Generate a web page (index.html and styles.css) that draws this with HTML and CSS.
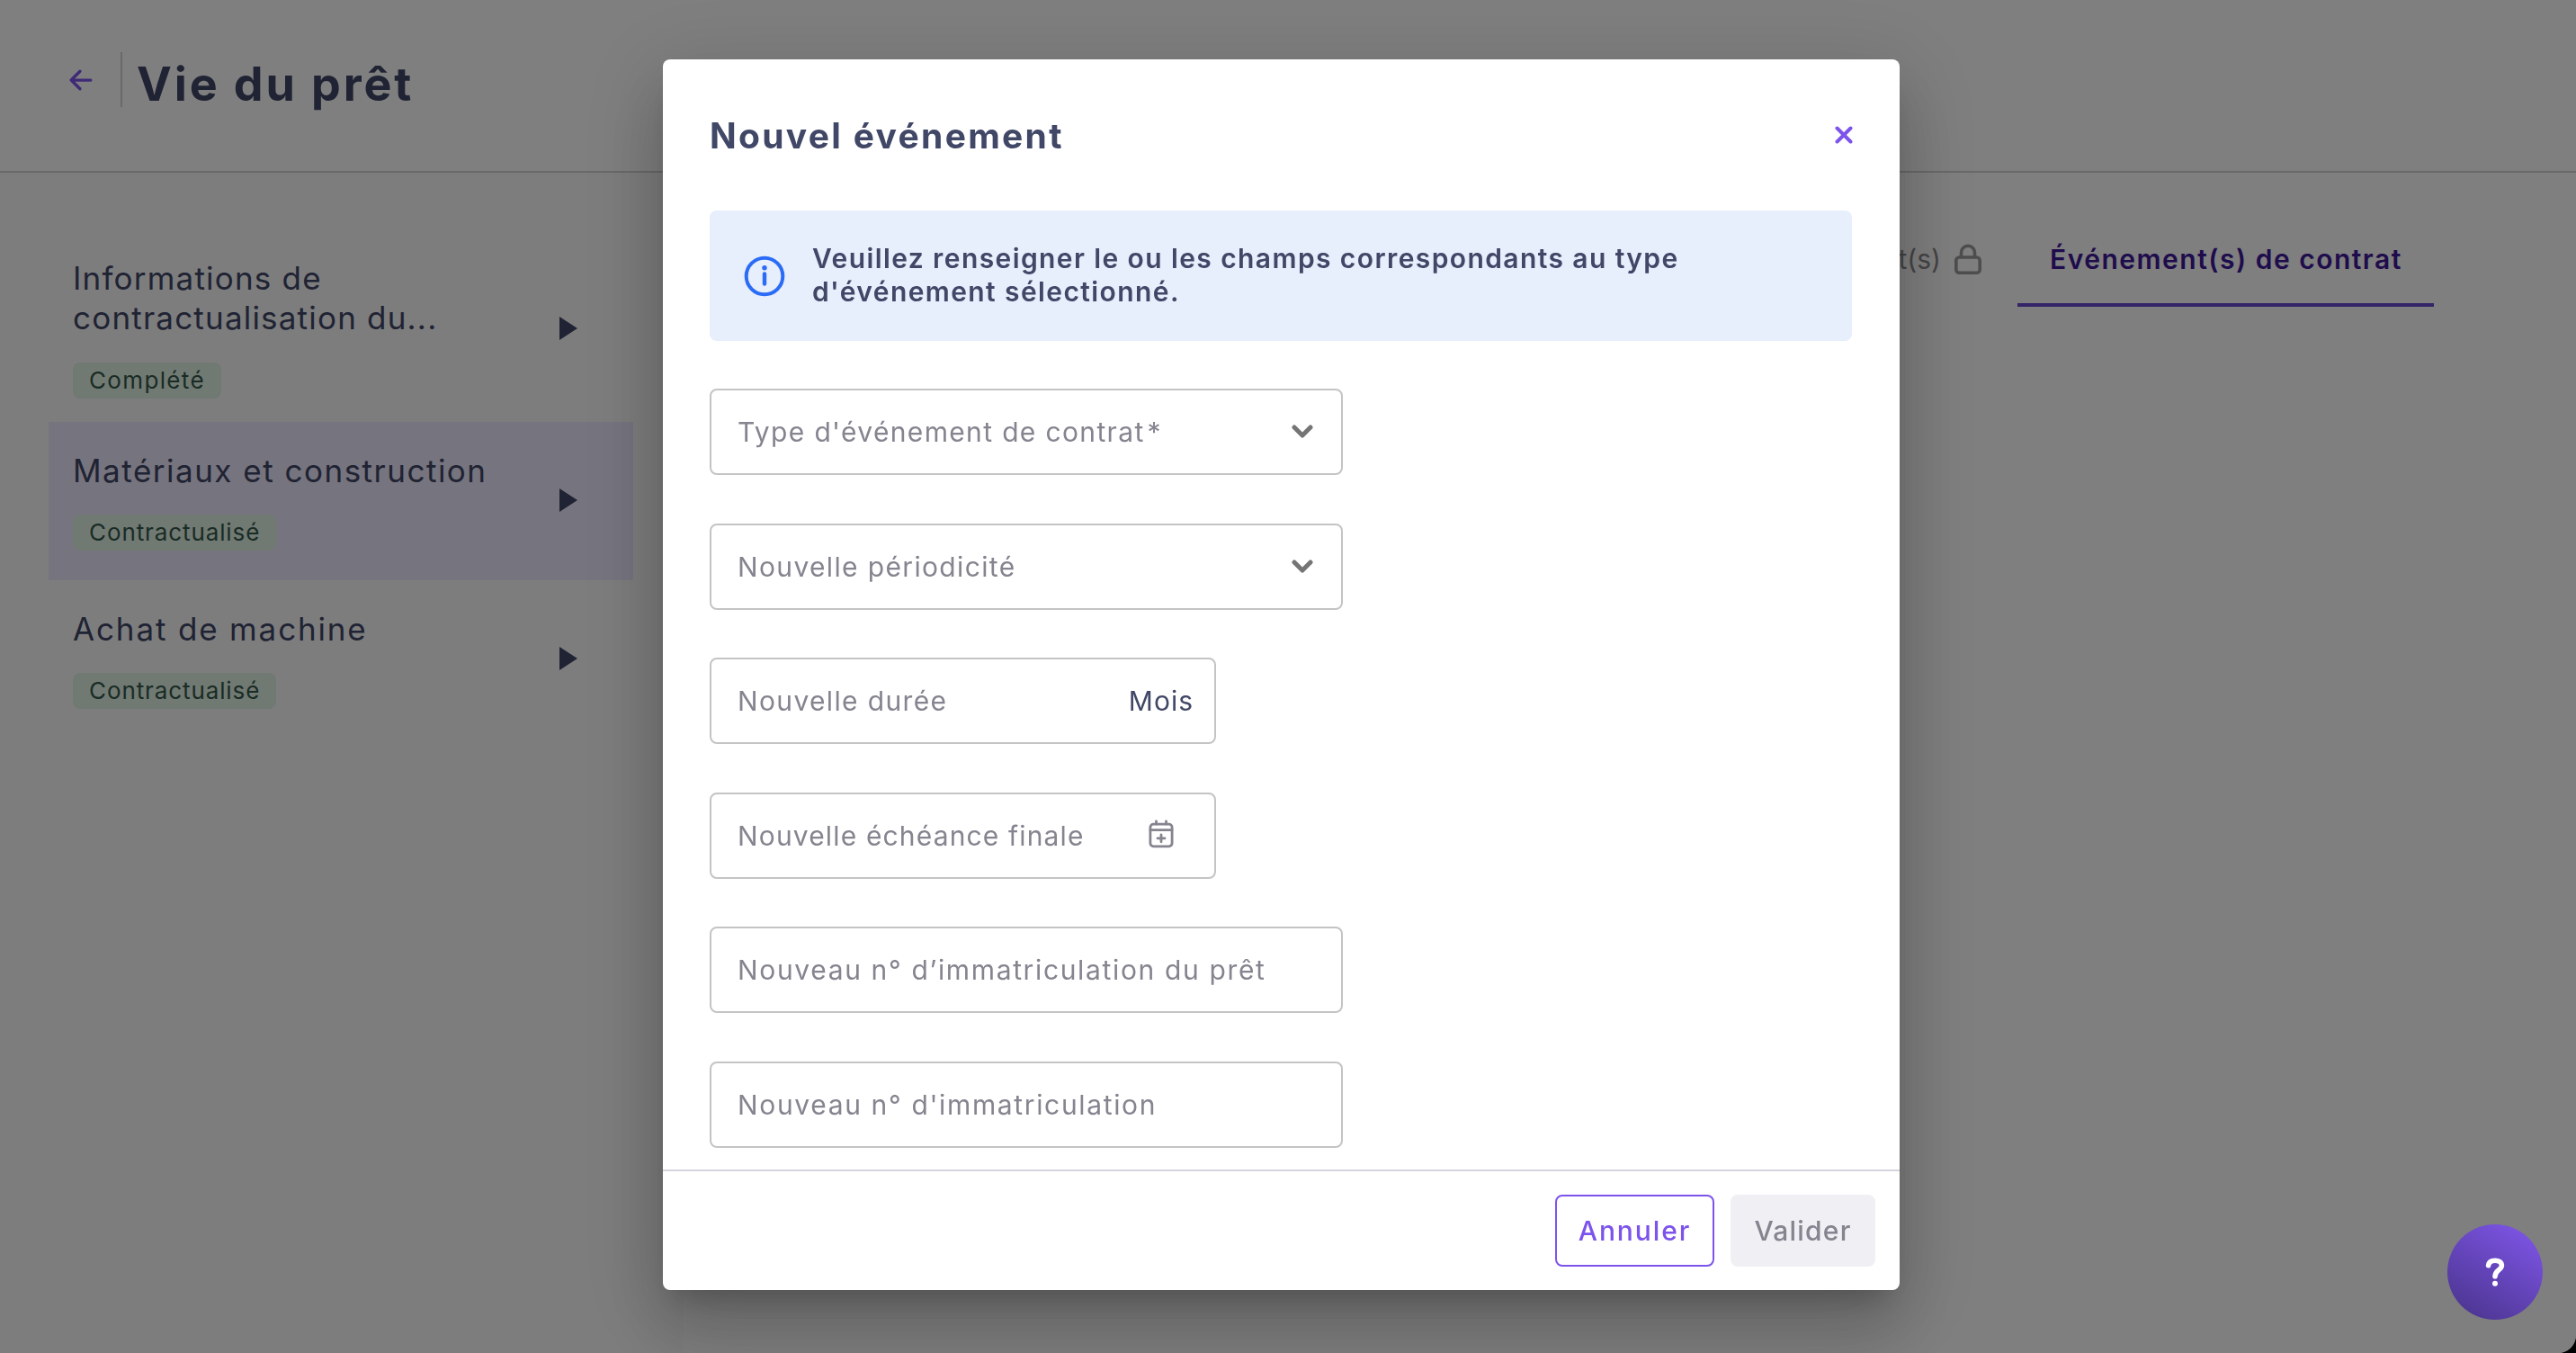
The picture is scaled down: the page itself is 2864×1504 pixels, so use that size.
FILE: index.html
```html
<!DOCTYPE html>
<html lang="fr">
<head>
    <meta charset="UTF-8">
    <meta name="viewport" content="width=device-width, initial-scale=1.0">
    <title>Vie du prêt</title>
    <link rel="stylesheet" href="styles.css">
</head>
<body>

    <div class="page">
        <header class="page-header">
            <svg class="back-icon" viewBox="0 0 24 22" fill="none" stroke="#7c54ec" stroke-width="3" stroke-linecap="round" stroke-linejoin="round">
                <path d="M22 11H2M11 2L2 11l9 9"/>
            </svg>
            <div class="divider"></div>
            <h1>Vie du prêt</h1>
        </header>

        <main class="content">
            <!-- Liste des objets du prêt -->
            <nav class="sidebar">
                <div class="item item-tall">
                    <div>
                        <div class="item-title tight">Informations de<br>contractualisation du...</div>
                        <span class="tag">Complété</span>
                    </div>
                    <svg class="caret" viewBox="0 0 20 26"><path d="M0 0l20 13L0 26z"/></svg>
                </div>
                <div class="item active">
                    <div>
                        <div class="item-title">Matériaux et construction</div>
                        <span class="tag tight">Contractualisé</span>
                    </div>
                    <svg class="caret" viewBox="0 0 20 26"><path d="M0 0l20 13L0 26z"/></svg>
                </div>
                <div class="item">
                    <div>
                        <div class="item-title wide">Achat de machine</div>
                        <span class="tag tight">Contractualisé</span>
                    </div>
                    <svg class="caret" viewBox="0 0 20 26"><path d="M0 0l20 13L0 26z"/></svg>
                </div>
            </nav>

            <!-- Onglets -->
            <div class="tabs">
                <div class="tab locked">
                    <span>Objet(s) du prêt(s)</span>
                    <svg class="lock" viewBox="0 0 30 34" fill="none" stroke="#9c9c9c" stroke-width="3.6">
                        <rect x="1.8" y="15" width="26.4" height="17.2" rx="3.5"/>
                        <path d="M7.5 15V9.8a7.5 7.5 0 0 1 15 0V15"/>
                    </svg>
                </div>
                <div class="tab current">Événement(s) de contrat</div>
            </div>
        </main>
    </div>

    <div class="overlay">
        <div class="modal">
            <div class="modal-header">
                <h2>Nouvel événement</h2>
                <svg class="close" viewBox="0 0 20 20" fill="none" stroke="#7c54ec" stroke-width="4" stroke-linecap="round">
                    <path d="M2.5 2.5l15 15M17.5 2.5l-15 15"/>
                </svg>
            </div>

            <div class="modal-body">
                <div class="alert">
                    <svg class="info" viewBox="0 0 46 46" fill="none" stroke="#2b6cf6" stroke-width="4">
                        <circle cx="23" cy="23" r="20.3"/>
                        <path d="M23 20.5v11" stroke-width="4.4" stroke-linecap="round"/>
                        <circle cx="23" cy="13.8" r="2.7" fill="#2b6cf6" stroke="none"/>
                    </svg>
                    <p>Veuillez renseigner le ou les champs correspondants au type<br>d'événement sélectionné.</p>
                </div>

                <div class="fields">
                    <div class="field">
                        <span>Type d'événement de contrat<span class="star">*</span></span>
                        <svg class="chevron" viewBox="0 0 24 16"><path d="M3 3l9 9 9-9"/></svg>
                    </div>
                    <div class="field">
                        <span>Nouvelle périodicité</span>
                        <svg class="chevron" viewBox="0 0 24 16"><path d="M3 3l9 9 9-9"/></svg>
                    </div>
                    <div class="field short">
                        <span>Nouvelle durée</span>
                        <span class="unit">Mois</span>
                    </div>
                    <div class="field short">
                        <span class="tight">Nouvelle échéance finale</span>
                        <svg class="calendar" viewBox="0 0 28 32" fill="none" stroke="#85848f" stroke-width="2.8" stroke-linecap="round">
                            <rect x="1.9" y="5.2" width="24.2" height="24.6" rx="3.5"/>
                            <path d="M2 11.7h24M8.5 2v3M19.5 2v3M14 16.8v8M10 20.8h8"/>
                        </svg>
                    </div>
                    <div class="field">
                        <span class="wide">Nouveau n° d’immatriculation du prêt</span>
                    </div>
                    <div class="field">
                        <span class="wide">Nouveau n° d'immatriculation</span>
                    </div>
                </div>
            </div>

            <div class="modal-footer">
                <button class="btn cancel">Annuler</button>
                <button class="btn submit" disabled>Valider</button>
            </div>
        </div>
    </div>

    <div class="help">
        <svg viewBox="0 0 22 32" fill="none" stroke="#fff" stroke-width="5.6" stroke-linecap="round" stroke-linejoin="round">
            <path d="M3.6 8.6C4 5 7 3.2 11 3.2c4.6 0 7.4 2.3 7.4 5.6 0 5-7.4 5-7.4 12"/>
            <circle cx="11" cy="28.8" r="3" fill="#fff" stroke="none"/>
        </svg>
    </div>

</body>
</html>
```
FILE: styles.css
```css
/* Général */
* {
    box-sizing: border-box;
}

html {
    background-color: #000;
}

body {
    margin: 0;
    height: 100vh;
    overflow: hidden;
    background-color: #000;
    color: #414766;
    font-family: Inter, "Open Sans", sans-serif;
    font-size: 30px;
    letter-spacing: 1.35px;
}

h1, h2, p {
    margin: 0;
}

svg {
    display: block;
    flex: none;
}

/* Page */
.page {
    height: 100vh;
    display: flex;
    flex-direction: column;
    background-color: #fff;
    border-bottom-right-radius: 20px;
}

.page-header {
    display: flex;
    align-items: flex-start;
    height: 192px;
    padding: 58px 0 0 77px;
    border-bottom: 2px solid #d2d2d4;
}

.back-icon {
    width: 26px;
    height: 24px;
    margin-top: 19px;
}

.divider {
    width: 2px;
    height: 61px;
    margin: 0 16px 0 31px;
    background-color: #d2d2d4;
}

.page-header h1 {
    margin-top: 5px;
    font-size: 52px;
    line-height: 61px;
    letter-spacing: 2.9px;
}

.content {
    flex: 1;
    display: flex;
}

/* Menu de gauche */
.sidebar {
    width: 760px;
    padding: 70px 56px 0 54px;
    background-color: #fafafc;
}

.item {
    display: flex;
    align-items: center;
    justify-content: space-between;
    height: 176px;
    padding: 0 62px 2px 27px;
}

.item-tall {
    height: 207px;
}

.item.active {
    background-color: #ece8fc;
}

.item-title {
    margin-bottom: 27px;
    font-size: 35px;
    line-height: 44px;
    letter-spacing: 1.5px;
}

.item-title.tight {
    margin-bottom: 28px;
    letter-spacing: 1.2px;
}

.item-title.wide {
    letter-spacing: 1.85px;
}

.tight {
    letter-spacing: 1.15px;
}

.wide {
    letter-spacing: 1.65px;
}

.tag {
    display: block;
    width: max-content;
    height: 40px;
    padding: 0 18px;
    border-radius: 8px;
    background-color: #e3f2e6;
    color: #33594a;
    font-size: 26px;
    line-height: 40px;
}

.tag.tight {
    letter-spacing: 0.9px;
}

.caret {
    width: 20px;
    height: 26px;
    fill: #414766;
}

/* Onglets */
.tabs {
    flex: 1;
    display: flex;
    justify-content: flex-end;
    align-items: flex-start;
    padding: 60px 158px 0 0;
}

.tab {
    display: flex;
    align-items: center;
    height: 89px;
    line-height: 72px;
    padding: 0 35px 17px 36px;
    white-space: nowrap;
}

.tab.locked {
    padding-right: 40px;
    color: #8a8a8a;
    letter-spacing: 0;
}

.lock {
    width: 30px;
    height: 34px;
    margin-left: 15px;
}

.tab.current {
    width: 463px;
    padding-bottom: 13px;
    border-bottom: 4px solid #6b49cf;
    color: #3f1899;
    font-weight: 600;
    letter-spacing: 1.5px;
}

/* Fenêtre modale */
.overlay {
    position: fixed;
    inset: 0;
    padding: 66px 752px 70px 737px;
    border-bottom-right-radius: 20px;
    background-color: rgba(0, 0, 0, 0.5);
}

.modal {
    display: flex;
    flex-direction: column;
    height: 1368px;
    border-radius: 8px;
    background-color: #fff;
    box-shadow: 0 22px 30px -14px rgba(0, 0, 0, 0.2),
        0 48px 76px 6px rgba(0, 0, 0, 0.14),
        0 18px 92px 16px rgba(0, 0, 0, 0.12);
}

.modal-header {
    display: flex;
    align-items: center;
    justify-content: space-between;
    height: 168px;
    padding: 0 52px;
}

.modal-header h2 {
    font-size: 39px;
    letter-spacing: 2.3px;
}

.close {
    width: 20px;
    height: 20px;
}

.modal-body {
    flex: 1;
    min-height: 0;
    overflow: hidden;
    padding: 0 53px 0 52px;
}

.alert {
    display: flex;
    align-items: center;
    gap: 30px;
    height: 145px;
    padding: 0 38px;
    border-radius: 8px;
    background-color: #e7eefc;
    font-weight: 600;
    line-height: 37px;
    letter-spacing: 1.4px;
}

.alert p {
    padding-bottom: 2px;
}

.info {
    width: 46px;
    height: 46px;
}

.fields {
    display: flex;
    flex-direction: column;
    gap: 53.6px;
    margin-top: 53px;
}

.field {
    display: flex;
    align-items: center;
    justify-content: space-between;
    width: 704px;
    height: 96px;
    padding: 0 31px 0 29px;
    border: 2px solid #c4c4c4;
    border-radius: 8px;
    color: #85848f;
}

.field.short {
    width: 563px;
    padding-right: 23px;
}

.star {
    margin-left: 3px;
}

.unit {
    color: #414766;
    letter-spacing: 1px;
}

.chevron {
    width: 24px;
    height: 16px;
    fill: none;
    stroke: #757575;
    stroke-width: 5;
    stroke-linecap: round;
    stroke-linejoin: round;
}

.calendar {
    width: 28px;
    height: 32px;
    margin: 0 22px 4px 0;
}

.modal-footer {
    display: flex;
    align-items: flex-start;
    justify-content: flex-end;
    gap: 18px;
    height: 134px;
    padding: 26px 27px 0;
    border-top: 2px solid #d6d4df;
}

.btn {
    height: 80px;
    border: 2px solid #7c54ec;
    border-radius: 8px;
    background: none;
    font: 500 30px Inter, sans-serif;
}

.cancel {
    width: 177px;
    color: #7c54ec;
    letter-spacing: 1.9px;
}

.submit {
    width: 161px;
    border-color: #f0eff4;
    background-color: #f0eff4;
    color: #85848f;
    letter-spacing: 1.2px;
}

/* Bouton d'aide */
.help {
    position: fixed;
    right: 37px;
    bottom: 37px;
    display: flex;
    align-items: center;
    justify-content: center;
    width: 106px;
    height: 106px;
    border-radius: 50%;
    background: linear-gradient(32deg, #4d3692 10%, #7c54e3 90%);
}

.help svg {
    width: 22px;
    height: 32px;
}
```
